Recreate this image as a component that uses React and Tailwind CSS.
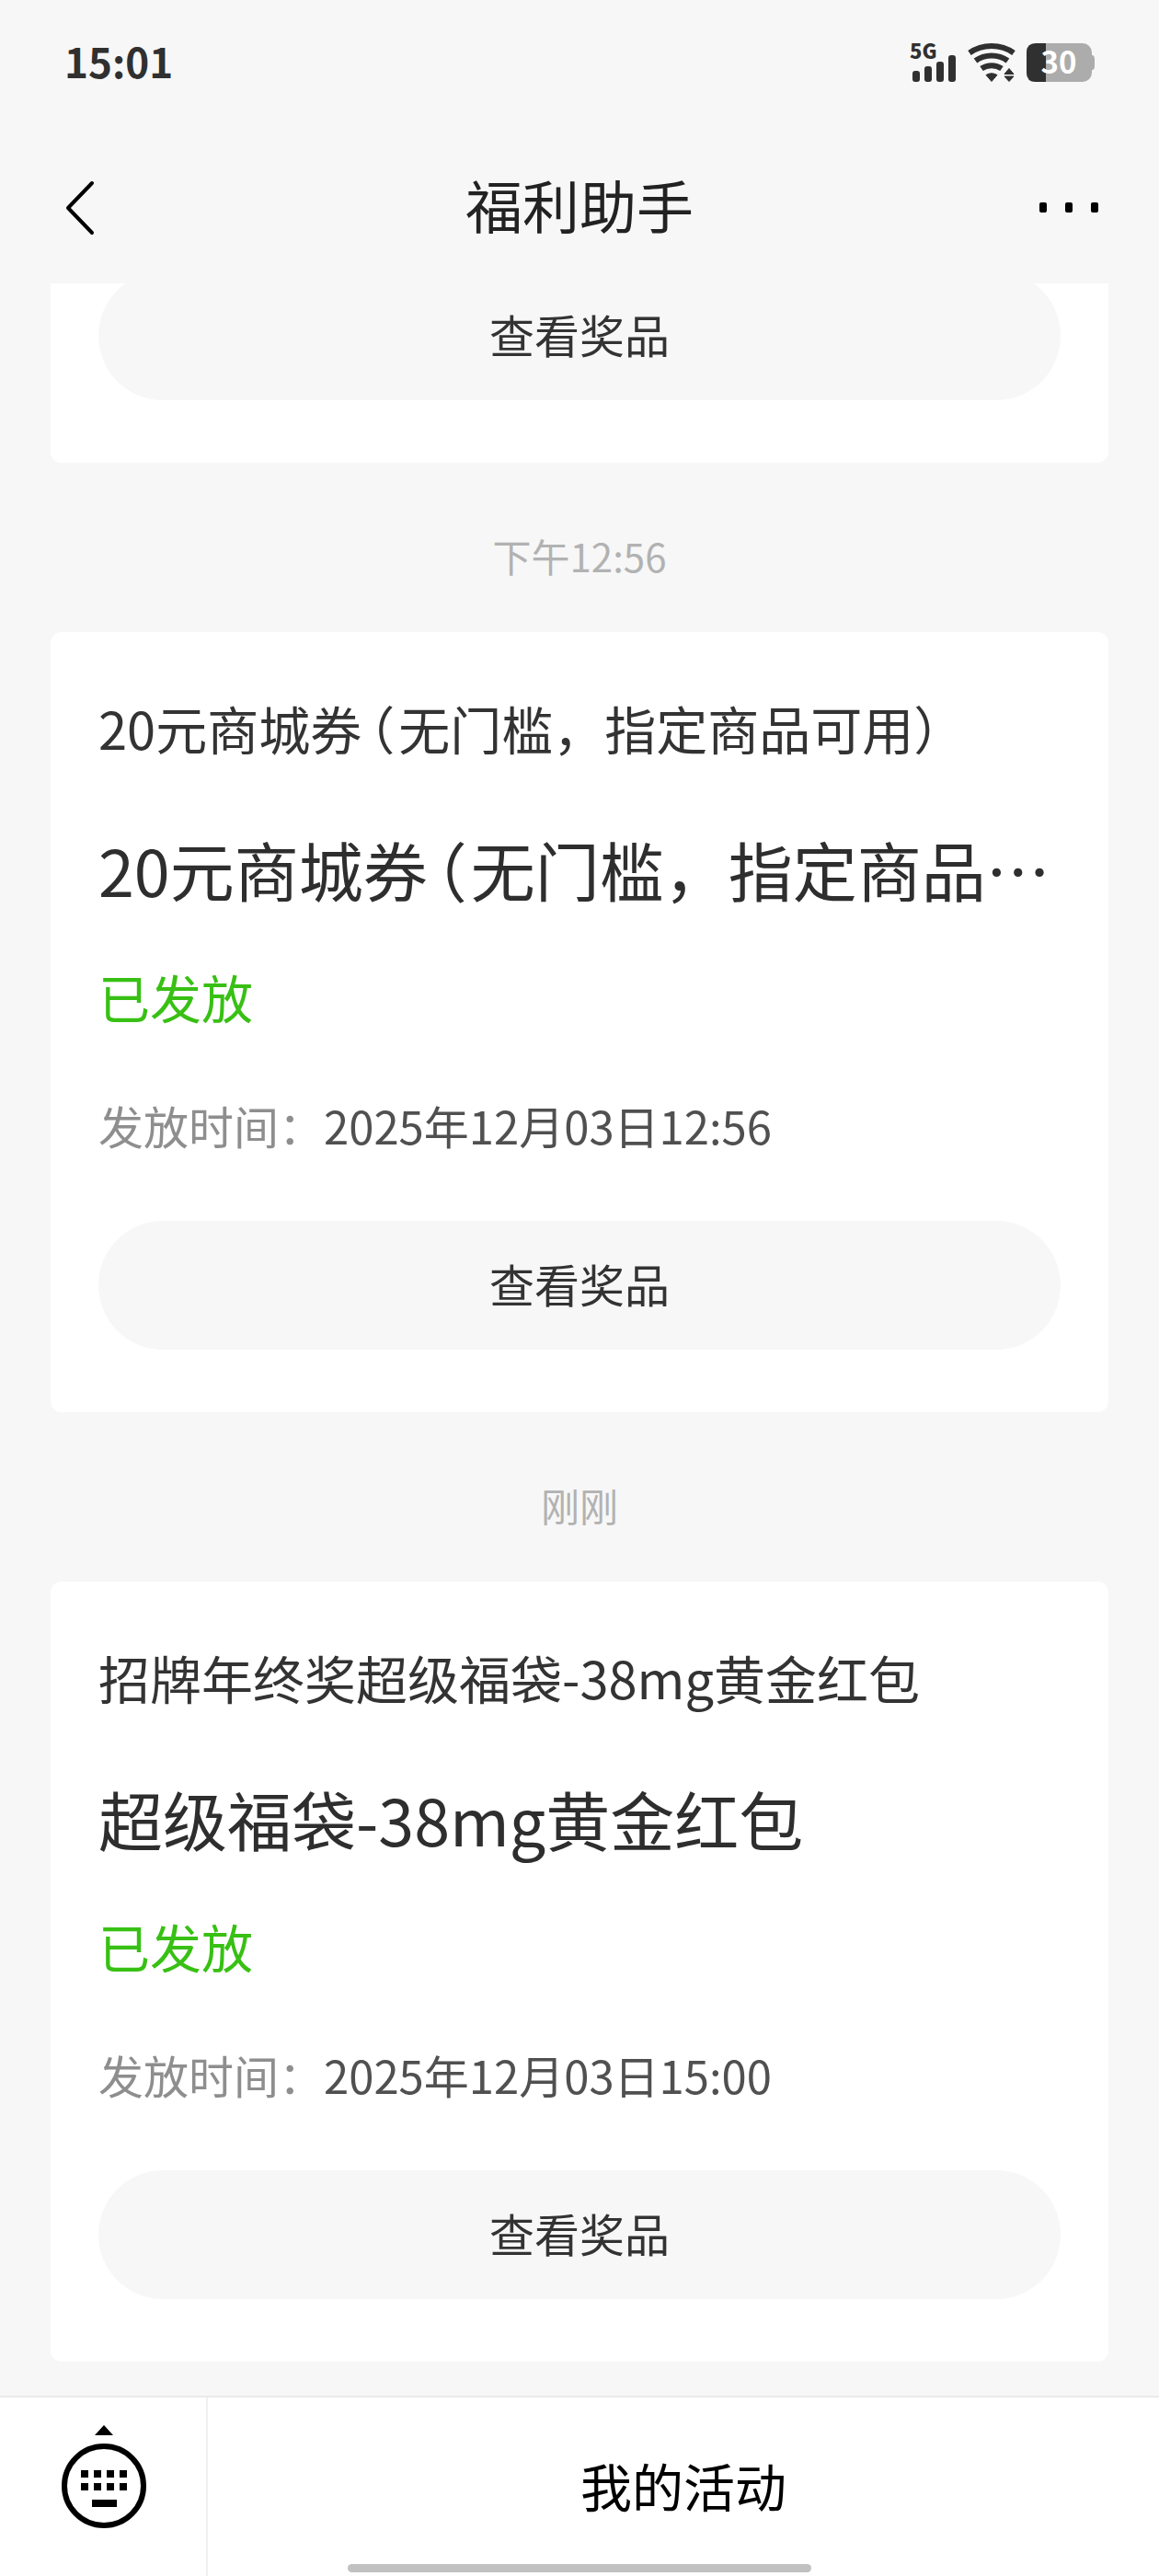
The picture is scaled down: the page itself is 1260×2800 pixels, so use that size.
import { Fragment } from "react";

const messages = [
  {
    id: 1,
    time: "下午12:56",
    desc: "20元商城券（无门槛，指定商品可用）",
    title: "20元商城券（无门槛，指定商品…",
    status: "已发放",
    date: "2025年12月03日12:56",
  },
  {
    id: 2,
    time: "刚刚",
    desc: "招牌年终奖超级福袋-38mg黄金红包",
    title: "超级福袋-38mg黄金红包",
    status: "已发放",
    date: "2025年12月03日15:00",
  },
];

// full-width brackets take half a cell, as the system font sets them
function BracketText({ children }) {
  return children.split(/([（）])/).map((part, i) =>
    part === "（" || part === "）" ? (
      <span
        key={i}
        className={
          part === "（"
            ? "pl-2 pr-1 [font-feature-settings:'halt']"
            : "[font-feature-settings:'halt']"
        }
      >
        {part}
      </span>
    ) : (
      <Fragment key={i}>{part}</Fragment>
    )
  );
}

function StatusBar() {
  return (
    <div className="flex h-[136px] shrink-0 items-center justify-between px-[70px] text-[#303030]">
      <span className="pb-1 text-[44px] leading-[64px] font-bold">15:01</span>
      <div className="flex items-center gap-3">
        <svg width="52" height="42" viewBox="0 0 52 42" fill="currentColor" className="overflow-visible" aria-hidden="true">
          <text x="1" y="17" fontSize="22" fontWeight="900">5G</text>
          <rect x="4" y="30" width="8" height="12" rx="3" />
          <rect x="17" y="25" width="8" height="17" rx="3" />
          <rect x="30" y="20" width="8" height="22" rx="3" />
          <rect x="43" y="13" width="8" height="29" rx="3" />
        </svg>
        <svg width="52" height="42" viewBox="0 0 52 42" fill="none" stroke="currentColor" aria-hidden="true">
          <path d="M2 10.500C16 0.500 36 0.500 50 10.500" strokeWidth="6" />
          <path d="M8.500 19C18.500 11.500 33.500 11.500 43.500 19" strokeWidth="6" />
          <path d="M15 27.500C21.500 23 30.500 23 37 27.500" strokeWidth="6" />
          <path d="M20 34.500Q26 31 32 34.500L26 41.500Z" fill="currentColor" strokeWidth="1" strokeLinejoin="round" />
          <path d="M40 33.500L45 27.500L50 33.500ZM40 36L45 41.500L50 36Z" fill="currentColor" strokeWidth="1" strokeLinejoin="round" />
        </svg>
        <svg width="74" height="42" viewBox="0 0 74 42" className="overflow-visible" aria-hidden="true">
          <rect width="71" height="42" rx="10" fill="#acacac" />
          <path d="M71 13h1q2 1 2 4v8q0 3-2 4h-1z" fill="#acacac" />
          <path d="M10 0H21V42H10Q0 42 0 32V10Q0 0 10 0Z" fill="currentColor" />
          <text x="35" y="33" fontSize="33" fontWeight="700" textAnchor="middle" fill="#fff">30</text>
        </svg>
      </div>
    </div>
  );
}

function Header() {
  return (
    <header className="grid h-[172px] shrink-0 grid-cols-[1fr_auto_1fr] items-center px-[66px] pt-2">
      <button type="button" aria-label="返回" className="justify-self-start">
        <svg width="40" height="64" viewBox="0 0 40 64" fill="none" stroke="#000" strokeWidth="4" strokeLinecap="round" strokeLinejoin="round">
          <path d="M34 5L8 32L34 59" />
        </svg>
      </button>
      <h1 className="pb-2 text-[62px] leading-[88px] text-[#222]">福利助手</h1>
      <button type="button" aria-label="更多" className="justify-self-end">
        <svg width="64" height="64" viewBox="0 0 64 64" fill="#000">
          <rect x="0" y="26" width="8" height="11" rx="2" />
          <rect x="28" y="26" width="8" height="11" rx="2" />
          <rect x="56" y="26" width="8" height="11" rx="2" />
        </svg>
      </button>
    </header>
  );
}

function PrizeButton() {
  return (
    <button type="button" className="h-[140px] w-full shrink-0 rounded-full bg-[#f7f7f7] pb-1 text-[49px] text-[#333]">
      查看奖品
    </button>
  );
}

function MessageCard({ message }) {
  return (
    <article className="shrink-0 rounded-xl bg-white px-[52px] pt-16 pb-[68px]">
      <p className="text-[56px] leading-[80px] text-[#333]">
        <BracketText>{message.desc}</BracketText>
      </p>
      <h2 className="mt-16 text-[70px] leading-[100px] whitespace-nowrap text-[#2e2e2e]">
        <BracketText>{message.title}</BracketText>
      </h2>
      <p className="mt-12 text-[56px] leading-[80px] text-[#38c014]">{message.status}</p>
      <dl className="mt-16 mb-[68px] flex text-[49px] leading-[72px]">
        <dt className="text-[#8e8e8e]">发放时间：</dt>
        <dd className="text-[#505050]">{message.date}</dd>
      </dl>
      <PrizeButton />
    </article>
  );
}

function Footer() {
  return (
    <footer className="relative flex h-[196px] shrink-0 border-t-2 border-[#eaeaea] bg-white">
      <button
        type="button"
        aria-label="切换键盘"
        className="flex w-[226px] items-center justify-center border-r-2 border-[#f0f0f0]"
      >
        <svg width="94" height="134" viewBox="0 0 94 134" fill="#000">
          <path d="M38 11L48 0L58 11Z" />
          <circle cx="48" cy="66" r="43" fill="none" stroke="#000" strokeWidth="6" />
          {[49, 63].map((y) =>
            [23, 37, 51, 65].map((x) => (
              <rect key={`${x}-${y}`} x={x} y={y} width="8" height="8" />
            ))
          )}
          <rect x="35" y="81" width="27" height="8" />
        </svg>
      </button>
      <button type="button" className="flex-1 pb-1 text-[56px] text-black">
        我的活动
      </button>
      <div className="absolute bottom-1 left-1/2 h-[9px] w-2/5 -translate-x-1/2 rounded-full bg-[#c1c1c1]" />
    </footer>
  );
}

export default function App() {
  return (
    <div
      lang="zh-CN"
      className="flex h-screen flex-col bg-[#f7f7f7] font-['Noto_Sans_CJK_SC','Noto_Sans',sans-serif]"
    >
      <StatusBar />
      <Header />
      {/* message list stays scrolled to the newest card */}
      <main className="flex min-h-0 flex-1 flex-col justify-end overflow-hidden px-[55px] pb-[37px]">
        <article className="shrink-0 rounded-xl bg-white px-[52px] pt-4 pb-[68px]">
          <PrizeButton />
        </article>
        {messages.map((message) => (
          <Fragment key={message.id}>
            <time className="flex h-[184px] shrink-0 items-center justify-center pt-4 text-[42px] text-[#b2b2b2]">
              {message.time}
            </time>
            <MessageCard message={message} />
          </Fragment>
        ))}
      </main>
      <Footer />
    </div>
  );
}
